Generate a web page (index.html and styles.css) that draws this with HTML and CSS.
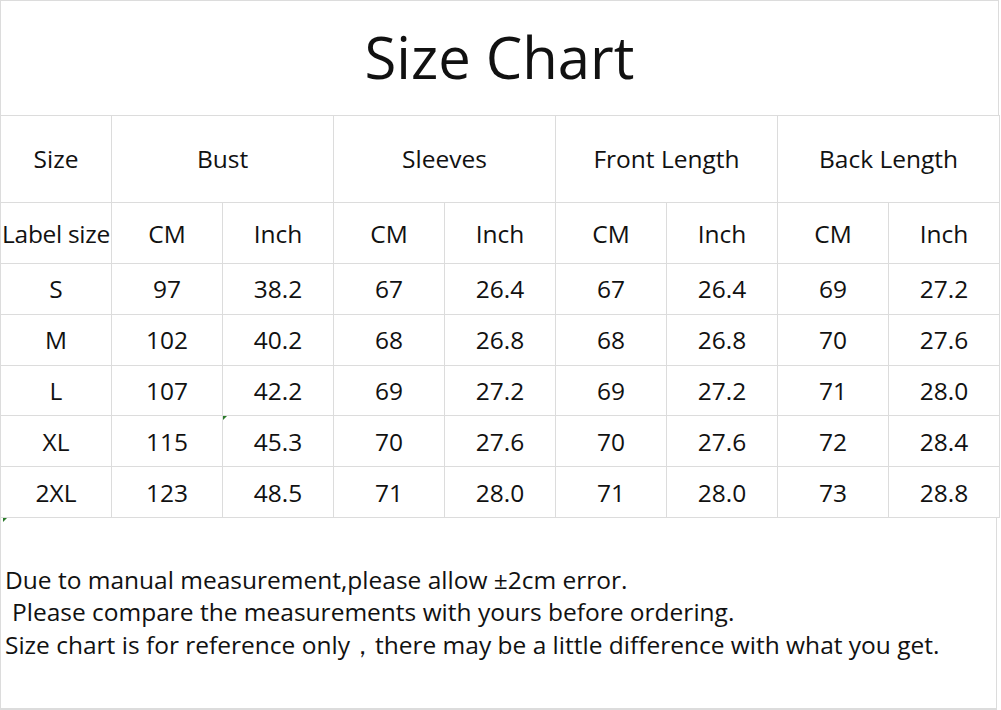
FILE: index.html
```html
<!DOCTYPE html>
<html>
<head>
<meta charset="utf-8">
<link rel="stylesheet" href="styles.css">
</head>
<body>
<div class="sheet">
  <div class="title">Size Chart</div>
  <table class="chart">
    <colgroup>
      <col class="c"><col class="c"><col class="c"><col class="c"><col class="c"><col class="c"><col class="c"><col class="c"><col class="c">
    </colgroup>
    <tr class="h1">
      <td>Size</td>
      <td colspan="2">Bust</td>
      <td colspan="2">Sleeves</td>
      <td colspan="2">Front Length</td>
      <td colspan="2">Back Length</td>
    </tr>
    <tr class="h2">
      <td class="label">Label size</td>
      <td>CM</td><td>Inch</td>
      <td>CM</td><td>Inch</td>
      <td>CM</td><td>Inch</td>
      <td>CM</td><td>Inch</td>
    </tr>
    <tr class="r"><td>S</td><td>97</td><td>38.2</td><td>67</td><td>26.4</td><td>67</td><td>26.4</td><td>69</td><td>27.2</td></tr>
    <tr class="r"><td>M</td><td>102</td><td>40.2</td><td>68</td><td>26.8</td><td>68</td><td>26.8</td><td>70</td><td>27.6</td></tr>
    <tr class="r"><td>L</td><td>107</td><td>42.2</td><td>69</td><td>27.2</td><td>69</td><td>27.2</td><td>71</td><td>28.0</td></tr>
    <tr class="r"><td>XL</td><td>115</td><td class="mark">45.3</td><td>70</td><td>27.6</td><td>70</td><td>27.6</td><td>72</td><td>28.4</td></tr>
    <tr class="r"><td>2XL</td><td>123</td><td>48.5</td><td>71</td><td>28.0</td><td>71</td><td>28.0</td><td>73</td><td>28.8</td></tr>
  </table>
  <div class="notes">
    <p>Due to manual measurement,please allow ±2cm error.</p>
    <p class="indent">Please compare the measurements with yours before ordering.</p>
    <p>Size chart is for reference only，there may be a little difference with what you get.</p>
  </div>
</div>
</body>
</html>
```

FILE: styles.css
```css
html, body {
  margin: 0;
  padding: 0;
  background: #ffffff;
}
body {
  font-family: "Open Sans", "Noto Sans", sans-serif;
  color: #111111;
}
.sheet {
  width: 999px;
  position: relative;
}
.title {
  height: 115px;
  border: 1px solid #dcdcdc;
  border-bottom: none;
  box-sizing: border-box;
  display: flex;
  align-items: center;
  justify-content: center;
  font-size: 58px;
  line-height: 1;
  padding-bottom: 2px;
}
.chart {
  border-collapse: collapse;
  table-layout: fixed;
  width: 999px;
}
.chart .c {
  width: 111px;
}
.chart td {
  border: 1px solid #dcdcdc;
  text-align: center;
  font-size: 24.5px;
  padding: 0;
  white-space: nowrap;
  position: relative;
}
.chart .h1 td { height: 84px; padding-bottom: 2px; }
.chart .h2 td { height: 59px; padding-top: 1px; }
.chart .r td { height: 49.8px; }
.chart td.label {
  letter-spacing: -0.3px;
}
.chart td.mark::before {
  content: "";
  position: absolute;
  left: 0;
  top: 0;
  border-top: 4px solid #2a7a2a;
  border-right: 4px solid transparent;
}
.notes {
  height: 192px;
  width: 997px;
  border-left: 1px solid #dcdcdc;
  border-right: 1px solid #dcdcdc;
  border-bottom: 2px solid #dcdcdc;
  box-sizing: border-box;
  padding-top: 46px;
  padding-left: 4px;
  font-size: 24.5px;
  line-height: 32.5px;
  position: relative;
}
.notes::before {
  content: "";
  position: absolute;
  left: 2px;
  top: 0;
  border-top: 4px solid #2a7a2a;
  border-right: 4px solid transparent;
}
.notes p {
  margin: 0;
  white-space: nowrap;
}
.notes .indent {
  padding-left: 7px;
}
```
